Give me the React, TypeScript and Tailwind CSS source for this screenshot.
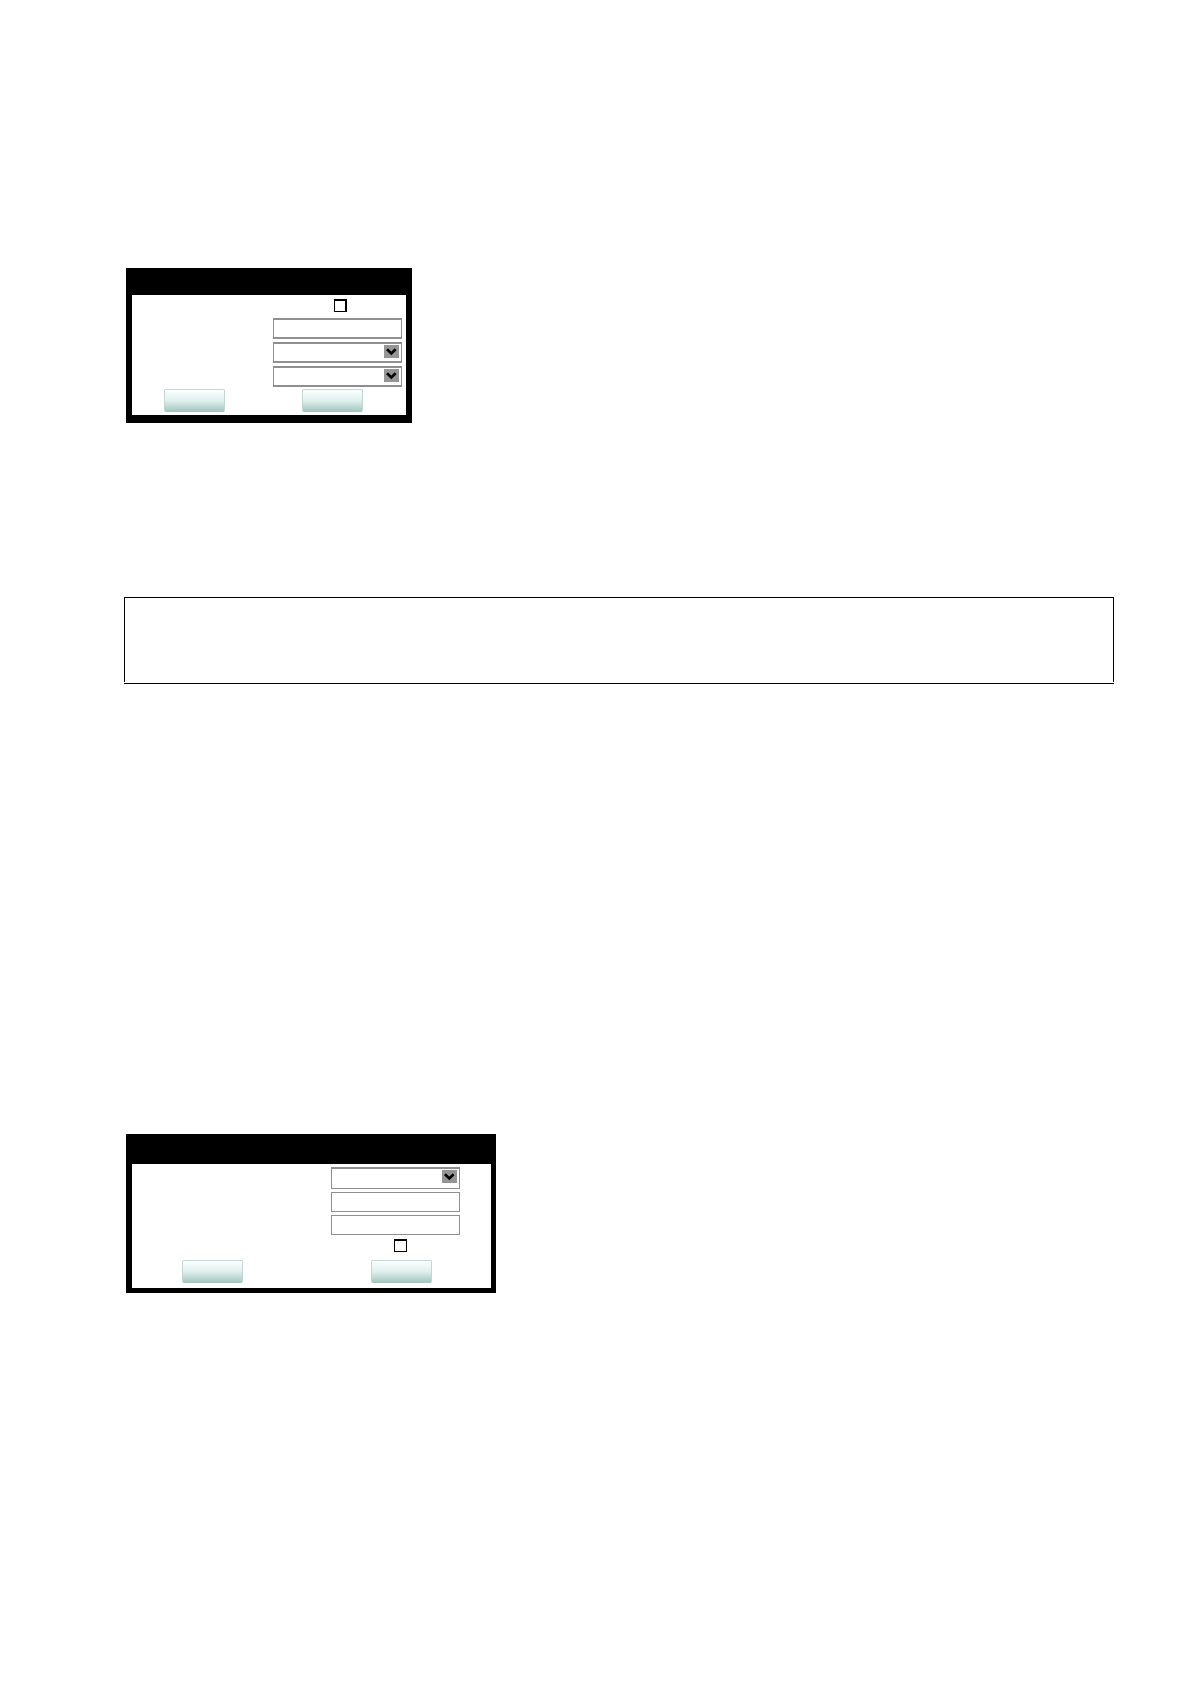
import type { ReactNode } from 'react'

const gloss =
  'h-[23px] w-[61px] rounded-[2px] border border-[#c3d8d4] border-b-[#a9c5bf] bg-linear-to-b from-[#fafffe] via-[#e0f0ed] to-[#a6c8c1]'

function Panel({ label, className, children }: { label: string; className: string; children: ReactNode }) {
  return (
    <form aria-label={label} className={`max-w-full border-black ${className}`} onSubmit={(e) => e.preventDefault()}>
      <div className="flex flex-col bg-white">{children}</div>
    </form>
  )
}

function TextField({ label, className }: { label: string; className: string }) {
  return (
    <input
      type="text"
      aria-label={label}
      className={`block w-[129px] border-x border-[#8f8f8f] bg-white px-1 text-xs outline-none ${className}`}
    />
  )
}

function SelectField({ label, className }: { label: string; className: string }) {
  return (
    <div className="relative w-[129px]">
      <select
        aria-label={label}
        className={`block w-full appearance-none border-x border-[#8f8f8f] bg-white px-1 text-xs outline-none ${className}`}
      />
      {/* Drop-down arrow */}
      <svg className="pointer-events-none absolute top-[3px] right-[3px]" width="15" height="13" viewBox="0 0 15 13">
        <rect width="15" height="13" fill="#959595" />
        <path d="M3 4.2 L7.3 8.4 L11.6 4.2" fill="none" stroke="#000" strokeWidth="2.6" />
      </svg>
    </div>
  )
}

function CheckField({ label, className }: { label: string; className: string }) {
  return (
    <input
      type="checkbox"
      aria-label={label}
      className={`block size-[13px] appearance-none border-black bg-white checked:bg-black ${className}`}
    />
  )
}

export default function App() {
  return (
    <main className="min-h-screen bg-white pt-[268px] pr-[76px] pb-16 pl-[124px] font-['Liberation_Sans',sans-serif]">
      {/* Account form */}
      <Panel label="Account" className="ml-0.5 w-[286px] border-x-6 border-t-27 border-b-8">
        <div className="pt-1 pl-[202px]">
          <CheckField label="Enabled" className="border border-t-2 border-r-2" />
        </div>
        <div className="mt-1.5 flex flex-col gap-[3px] pl-[141px]">
          <TextField label="Name" className="h-[21px] border-y-2" />
          <SelectField label="Type" className="h-[21px] border-y-2" />
          <SelectField label="Mode" className="h-[21px] border-y-2" />
        </div>
        <div className="mt-0.5 flex gap-[77px] pb-[3px] pl-8">
          <button type="submit" aria-label="Submit" className={gloss} />
          <button type="reset" aria-label="Reset" className={gloss} />
        </div>
      </Panel>

      {/* Note box */}
      <section aria-label="Note" className="mt-[174px] border-b border-black pb-px">
        <div className="h-[85px] border-x border-t border-black" />
      </section>

      {/* Settings form */}
      <Panel label="Settings" className="mt-[450px] ml-0.5 w-[370px] border-t-30 border-r-5 border-b-5 border-l-6">
        <div className="flex flex-col gap-[3px] pt-[3px] pl-[199px]">
          <SelectField label="Type" className="h-[22px] border-t-2 border-b" />
          <TextField label="Name" className="h-5 border-y" />
          <TextField label="Value" className="h-5 border-y" />
        </div>
        <div className="mt-1 pl-[262px]">
          <CheckField label="Enabled" className="border border-t-2" />
        </div>
        <div className="mt-2 flex gap-32 pb-[5px] pl-[50px]">
          <button type="submit" aria-label="Submit" className={gloss} />
          <button type="reset" aria-label="Reset" className={gloss} />
        </div>
      </Panel>
    </main>
  )
}
